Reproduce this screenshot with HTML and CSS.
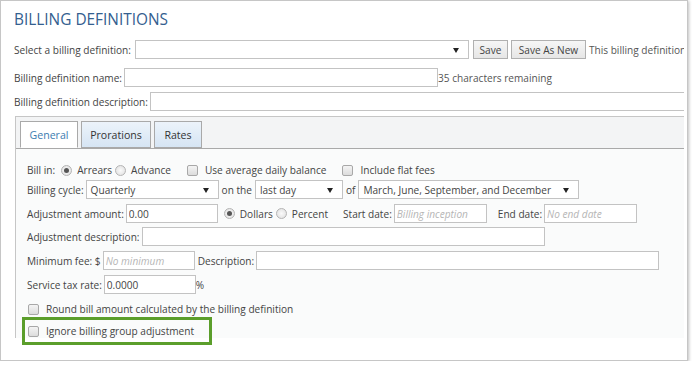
FILE: index.html
```html
<!DOCTYPE html>
<html lang="en">
<head>
  <meta charset="UTF-8">
  <title>Billing Definitions</title>
  <link rel="stylesheet" href="styles.css">
</head>
<body>
  <div class="frame">
    <div class="inner">
      <h1>BILLING DEFINITIONS</h1>

      <!-- Definition picker -->
      <div class="row row-pick">
        <span class="label">Select a billing definition:</span>
        <span class="select w-pick"><span class="value"></span></span>
        <button class="btn btn-save">Save</button>
        <button class="btn btn-new">Save As New</button>
        <span class="note">This billing definition is used by 0 accounts.</span>
      </div>

      <div class="row row-name">
        <span class="label">Billing definition name:</span>
        <input type="text" class="w-name">
        <span class="note">35 characters remaining</span>
      </div>

      <div class="row row-desc">
        <span class="label">Billing definition description:</span>
        <input type="text" class="w-desc">
      </div>

      <!-- Tabs -->
      <div class="tabs">
        <div class="tab-bar">
          <div class="tab tab-general active">General</div>
          <div class="tab tab-prorations">Prorations</div>
          <div class="tab tab-rates">Rates</div>
        </div>

        <div class="tab-body">
          <div class="row row-bill">
            <span class="label">Bill in:</span>
            <span class="radio checked"></span><span class="opt">Arrears</span>
            <span class="radio"></span><span class="opt">Advance</span>
            <span class="check"></span><span class="opt">Use average daily balance</span>
            <span class="check"></span><span class="opt">Include flat fees</span>
          </div>

          <div class="row row-cycle">
            <span class="label">Billing cycle:</span>
            <span class="select w-cycle"><span class="value">Quarterly</span></span>
            <span class="label">on the</span>
            <span class="select w-day"><span class="value">last day</span></span>
            <span class="label">of</span>
            <span class="select w-months"><span class="value">March, June, September, and December</span></span>
          </div>

          <div class="row row-amount">
            <span class="label">Adjustment amount:</span>
            <input type="text" class="w-amount" value="0.00">
            <span class="radio checked"></span><span class="opt">Dollars</span>
            <span class="radio"></span><span class="opt">Percent</span>
            <span class="label lbl-start">Start date:</span>
            <input type="text" class="w-date" placeholder="Billing inception">
            <span class="label lbl-end">End date:</span>
            <input type="text" class="w-date" placeholder="No end date">
          </div>

          <div class="row row-adjdesc">
            <span class="label">Adjustment description:</span>
            <input type="text" class="w-adjdesc">
          </div>

          <div class="row row-min">
            <span class="label">Minimum fee: $</span>
            <input type="text" class="w-min" placeholder="No minimum">
            <span class="label lbl-mdesc">Description:</span>
            <input type="text" class="w-mdesc">
          </div>

          <div class="row row-tax">
            <span class="label">Service tax rate:</span>
            <input type="text" class="w-tax" value="0.0000">
            <span class="label">%</span>
          </div>

          <div class="row row-opt">
            <span class="check"></span><span class="opt">Round bill amount calculated by the billing definition</span>
          </div>

          <div class="row row-opt row-ignore">
            <span class="check"></span><span class="opt">Ignore billing group adjustment</span>
            <span class="highlight"></span>
          </div>
        </div>
      </div>
    </div>
  </div>
</body>
</html>
```

FILE: styles.css
```css
/* Reset */
* {
  margin: 0;
  padding: 0;
  box-sizing: border-box;
}

body {
  background: #fff;
  font-family: 'Open Sans', sans-serif;
  font-size: 10.1px;
  color: #444;
}

.frame {
  width: 688px;
  height: 361px;
  border: 1px solid #c6c6c6;
  box-shadow: 1px 1px 3px rgba(0, 0, 0, 0.25);
  background: #fff;
  white-space: nowrap;
}

.inner {
  height: 100%;
  margin-right: 3px;
  overflow: hidden;
}

h1 {
  margin: 9px 0 0 13px;
  font-size: 15.4px;
  font-weight: 400;
  line-height: 20px;
  color: #34608f;
}

.row {
  display: flex;
  align-items: center;
  padding-left: 13px;
}

.row > * {
  flex-shrink: 0;
}

.label {
  margin-right: 2px;
}

.note {
  color: #555;
}

/* Inputs */
input[type="text"] {
  height: 19px;
  border: 1px solid #c3c3c3;
  background: #fff;
  font-family: inherit;
  font-size: 10.1px;
  color: #444;
  padding: 0 2px;
  outline: none;
}

input::placeholder {
  color: #b5b5b5;
  font-style: italic;
}

.select {
  position: relative;
  display: flex;
  align-items: center;
  height: 19px;
  border: 1px solid #c3c3c3;
  background: #fff;
  padding: 0 4px;
}

.select::after {
  content: '';
  position: absolute;
  right: 9px;
  top: 7px;
  border-left: 3px solid transparent;
  border-right: 3px solid transparent;
  border-top: 5px solid #222;
}

.btn {
  height: 19px;
  border: 1px solid #b0b0b0;
  background: linear-gradient(#f6f6f6, #e6e6e6);
  font-family: inherit;
  font-size: 10.1px;
  color: #444;
  padding: 0 5px;
}

/* Header rows */
.row-pick {
  margin-top: 10px;
}

.w-pick { width: 334px; margin-left: 2px; }
.btn-save { width: 35px; margin-left: 4px; }
.btn-new { width: 75px; margin-left: 3px; margin-right: 3px; }

.row-name {
  margin-top: 9px;
}

.w-name { width: 314px; }

.row-desc {
  margin-top: 5px;
}

.w-desc { width: 600px; }

/* Tabs */
.tabs {
  margin: 5px 0 0 14px;
  width: 760px;
  border-left: 1px solid #c6c6c6;
  border-top: 1px solid #c6c6c6;
  background: #fafbfb;
  height: 222px;
}

.tab-bar {
  display: flex;
  gap: 3px;
  padding: 4px 0 0 4px;
  height: 32px;
  background: #f3f4f5;
  border-bottom: 1px solid #a9a9a9;
}

.tab {
  height: 27px;
  display: flex;
  align-items: center;
  justify-content: center;
  border: 1px solid #a9a9a9;
  background: linear-gradient(#ecf3fa, #d6e5f4);
  color: #333;
  font-size: 10.6px;
}

.tab.active {
  background: #fff;
  color: #3c7cb0;
  border-bottom-color: #fff;
}

.tab-general { width: 58px; }
.tab-prorations { width: 70px; }
.tab-rates { width: 48px; }

.tab-body {
  padding-top: 12px;
}

.tab-body .row {
  padding-left: 11px;
}

/* Radio and check marks */
.radio {
  width: 11px;
  height: 11px;
  border-radius: 50%;
  border: 1px solid #b4b4b4;
  background: radial-gradient(#fafafa, #dedede);
  margin: 0 5px 0 3px;
  position: relative;
}

.radio.checked::after {
  content: '';
  position: absolute;
  left: 2px;
  top: 2px;
  width: 5px;
  height: 5px;
  border-radius: 50%;
  background: #555;
}

.check {
  width: 11px;
  height: 11px;
  border-radius: 2px;
  border: 1px solid #a8a8a8;
  background: linear-gradient(#f4f4f4, #dcdcdc);
  margin-right: 7px;
}

.opt + .check {
  margin-left: 16px;
}

.row-bill {
  height: 18px;
}

.row-bill .label {
  margin-right: 3px;
}

.row-cycle {
  margin-top: 1px;
}

.w-cycle { width: 133px; }
.w-day { width: 88px; }
.w-months { width: 221px; }

.row-cycle .label {
  margin: 0 3px;
}

.row-cycle .label:first-child {
  margin: 0 2px 0 0;
}

.row-amount {
  margin-top: 5px;
}

.w-amount { width: 92px; margin-right: 3px; }
.w-date { width: 93px; }
.lbl-start { margin-left: 15px; }
.lbl-end { margin-left: 11px; }

.row-adjdesc {
  margin-top: 4px;
}

.w-adjdesc { width: 403px; height: 20px; }

.row-min {
  margin-top: 5px;
}

.w-min { width: 92px; }
.lbl-mdesc { margin-left: 3px; }
.w-mdesc { width: 403px; }

.row-tax {
  margin-top: 5px;
}

.w-tax { width: 92px; }

.row-opt {
  height: 20px;
  margin-top: 5px;
}

.row-opt .check {
  margin-left: 1px;
}

.row-ignore {
  position: relative;
  margin-top: 2px;
}

/* Annotation around the last option */
.highlight {
  position: absolute;
  left: 6px;
  top: -4px;
  width: 190px;
  height: 28px;
  border: 3px solid #5b9e2b;
}
```
